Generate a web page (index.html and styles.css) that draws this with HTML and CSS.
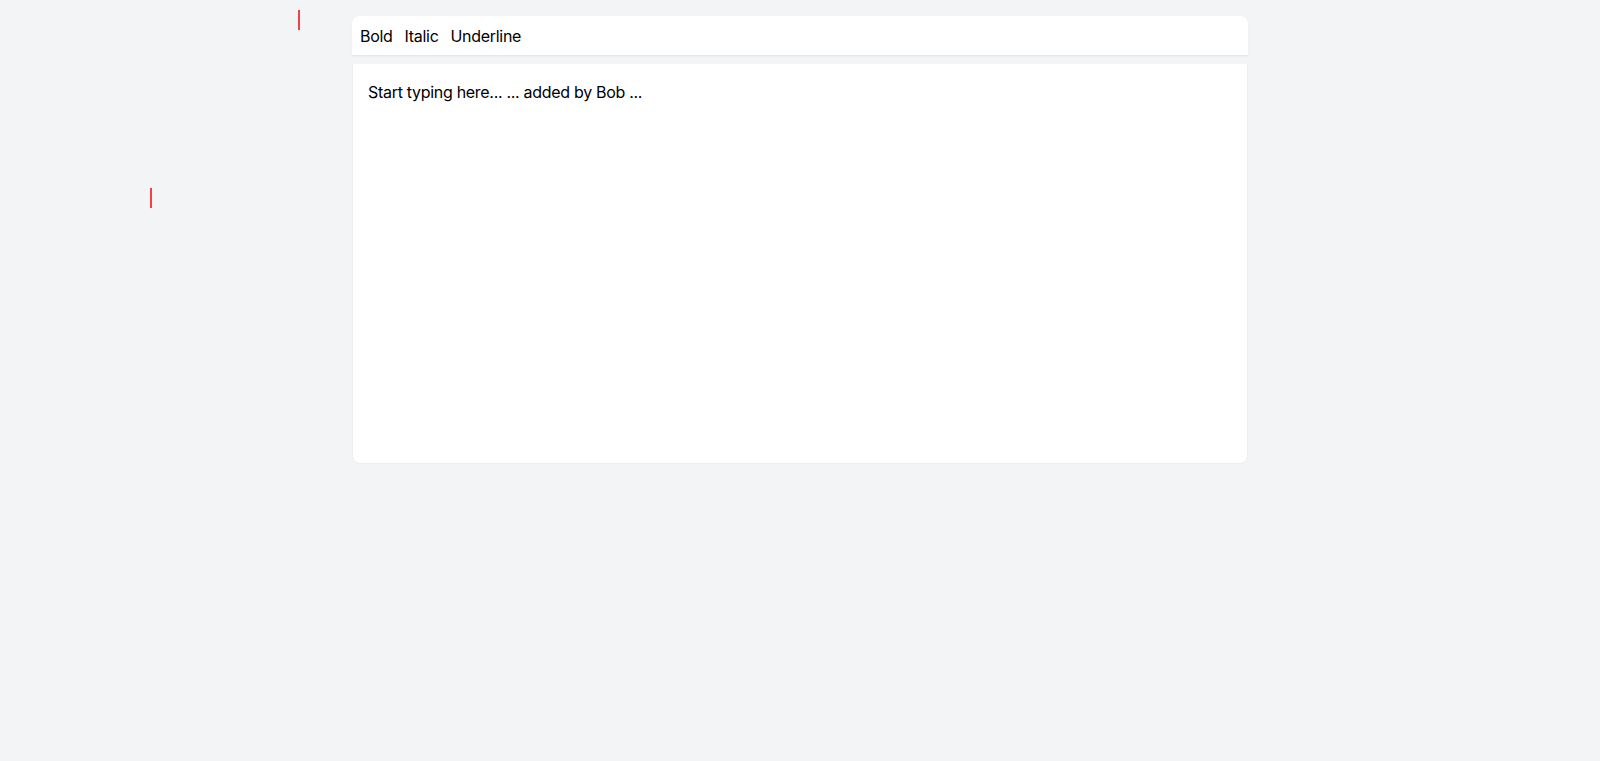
FILE: index.html
```html
<!DOCTYPE html>
<html lang="en">
<head>
    <meta charset="UTF-8">
    <meta name="viewport" content="width=device-width, initial-scale=1.0"/>
    <title>Collaborative Editor</title>
    <link rel="stylesheet" href="styles.css">
</head>
<body>
<div class="cursor" style="left: 298px; top: 10px;"></div>
<div class="cursor" style="left: 150px; top: 188px;"></div>
<div class="container">
    <div class="toolbar">
        <button class="tool">Bold</button>
        <button class="tool">Italic</button>
        <button class="tool">Underline</button>
    </div>
    <div class="editor" contenteditable="true">
        <p>Start typing here... ... added by Bob ...</p>
    </div>
</div>
</body>
</html>
```

FILE: styles.css
```css
body {
    margin: 0;
    background-color: #f3f4f6;
    font-family: Inter, "Noto Sans", sans-serif;
    font-size: 16px;
    letter-spacing: -0.3px;
    color: #000;
    min-height: 100vh;
}
.container {
    max-width: 896px;
    margin: 0 auto;
    padding-top: 16px;
}
.toolbar {
    display: flex;
    align-items: center;
    gap: 4px;
    height: 40px;
    box-sizing: border-box;
    padding: 0 4px;
    background-color: #fff;
    border-radius: 8px 8px 0 0;
    border-bottom: 1px solid #e5e7eb;
    box-shadow: 0 1px 2px rgba(0, 0, 0, 0.03);
}
.tool {
    background: none;
    border: none;
    padding: 4px;
    font-family: inherit;
    font-size: 16px;
    letter-spacing: inherit;
    color: #000;
    cursor: pointer;
}
.editor {
    margin-top: 8px;
    min-height: 400px;
    box-sizing: border-box;
    padding: 16px 15px;
    background-color: #fff;
    border: 1px solid #eceef1;
    border-top: none;
    border-radius: 0 0 8px 8px;
    outline: none;
}
.editor p {
    margin: 0;
    line-height: 24px;
}
.cursor {
    position: absolute;
    width: 2px;
    height: 20px;
    background-color: #f43f46;
}
```
